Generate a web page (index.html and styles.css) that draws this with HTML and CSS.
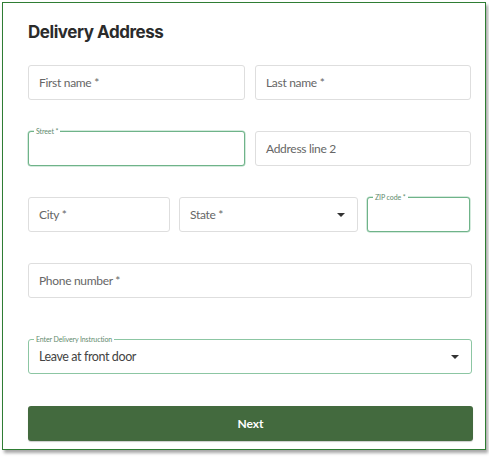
FILE: index.html
```html
<!DOCTYPE html>
<html lang="en">
<head>
<meta charset="utf-8">
<title>Delivery Address</title>
<link rel="stylesheet" href="styles.css">
</head>
<body>
<div class="frame">
  <h1 class="title">Delivery Address</h1>
  <form class="form">
    <div class="row two">
      <div class="field"><span class="ph">First name *</span></div>
      <div class="field"><span class="ph">Last name *</span></div>
    </div>
    <div class="row two">
      <div class="field active"><label class="float">Street *</label></div>
      <div class="field"><span class="ph">Address line 2</span></div>
    </div>
    <div class="row three">
      <div class="field"><span class="ph">City *</span></div>
      <div class="field select"><span class="ph">State *</span>
        <svg class="caret" width="8" height="4" viewBox="0 0 8 4"><path d="M0 0H8L4 4Z" fill="#333"/></svg>
      </div>
      <div class="field active"><label class="float">ZIP code *</label></div>
    </div>
    <div class="row one">
      <div class="field"><span class="ph">Phone number *</span></div>
    </div>
    <div class="row one last">
      <div class="field active select soft"><label class="float">Enter Delivery Instruction</label>
        <span class="val">Leave at front door</span>
        <svg class="caret" width="8" height="4" viewBox="0 0 8 4"><path d="M0 0H8L4 4Z" fill="#333"/></svg>
      </div>
    </div>
    <button type="button" class="next">Next</button>
  </form>
</div>
</body>
</html>
```

FILE: styles.css
```css
html, body {
  margin: 0;
  padding: 0;
  background: #fff;
}
body {
  width: 489px;
  height: 457px;
  overflow: hidden;
  font-family: Lato, "Liberation Sans", sans-serif;
}
.frame {
  margin: 2px 0 0 2px;
  height: 446px;
  border: 1px solid #2f7d34;
  box-shadow: 2px 3px 3px rgba(0, 0, 0, 0.35);
  padding: 0 12px 0 25px;
  box-sizing: content-box;
  width: 445px;
}
.title {
  margin: 0;
  padding-top: 17px;
  height: 29px;
  font-family: Inter, "Liberation Sans", sans-serif;
  font-weight: 700;
  font-size: 17px;
  line-height: 24px;
  letter-spacing: -0.45px;
  color: #2b2b2b;
}
.form {
  margin-top: 16px;
  display: flex;
  flex-direction: column;
}
.row {
  display: grid;
  column-gap: 10px;
  margin-bottom: 31px;
}
.row.two { grid-template-columns: 217px 216px; }
.row.three { grid-template-columns: 142px 179px 103px; column-gap: 9px; }
.row.one { grid-template-columns: 444px; }
.row.last { margin-bottom: 32px; margin-top: 10px; }
.field {
  position: relative;
  height: 35px;
  box-sizing: border-box;
  border: 1px solid #dedede;
  border-radius: 3px;
  display: flex;
  align-items: center;
  padding: 0 10px;
  background: #fff;
}
.ph {
  font-size: 12px;
  letter-spacing: -0.3px;
  color: #666;
}
.val {
  font-size: 12.5px;
  letter-spacing: -0.4px;
  color: #444;
}
.field.active {
  border-color: #6fb389;
  box-shadow: 0 0 0 0.5px #a9d5bb;
}
.field.soft {
  border-color: #8cc6a3;
  box-shadow: none;
}
.float {
  position: absolute;
  top: -5px;
  left: 5px;
  padding: 0 2px;
  background: #fff;
  font-size: 7px;
  line-height: 9px;
  letter-spacing: -0.1px;
  color: #5f8a6e;
}
.select {
  justify-content: space-between;
  padding-right: 12px;
}
.caret { display: block; }
.next {
  width: 445px;
  height: 35px;
  border: 0;
  border-radius: 3px;
  background: #436a3e;
  color: #fff;
  font-family: Lato, "Liberation Sans", sans-serif;
  font-weight: 700;
  font-size: 12px;
  box-shadow: 0 1px 1px rgba(0,0,0,0.2);
}
```
